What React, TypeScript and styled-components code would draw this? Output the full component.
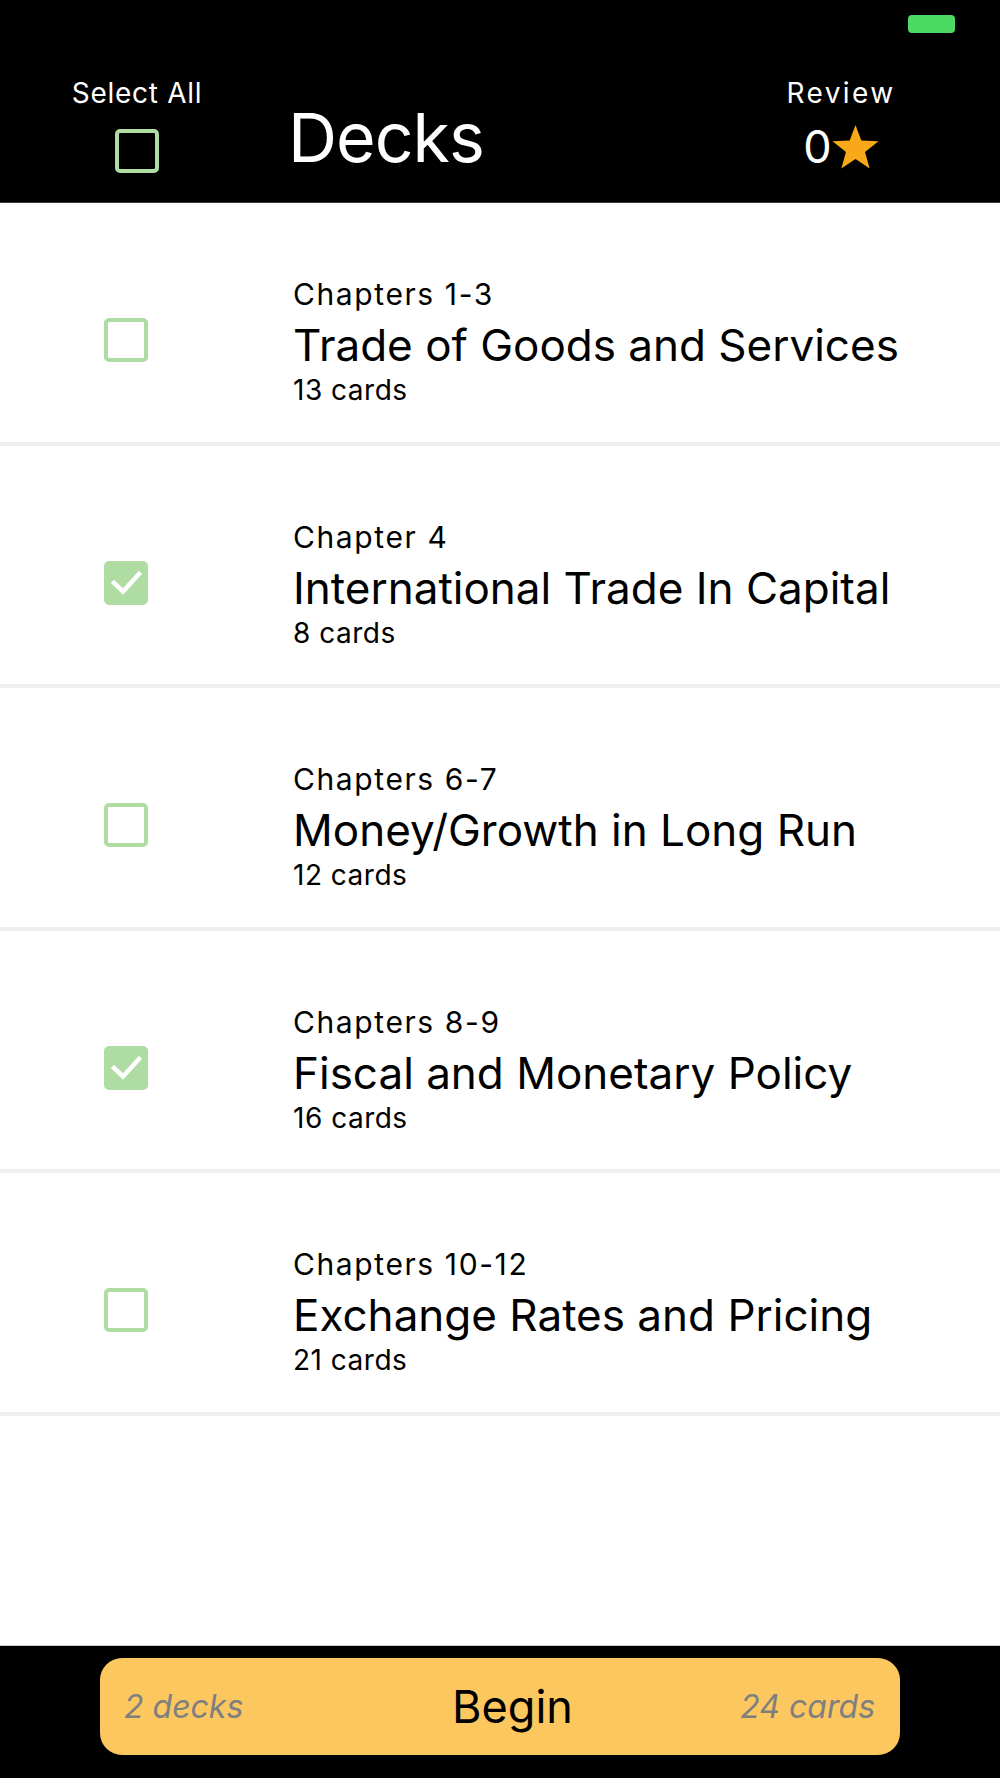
import React from "react";
import styled, { createGlobalStyle } from "styled-components";

const GlobalStyle = createGlobalStyle`
  html, body { margin: 0; padding: 0; background: #ffffff; }
  body { font-family: Inter, "Noto Sans", "Liberation Sans", sans-serif; }
  * { box-sizing: border-box; }
`;

const Page = styled.div`
  width: 1000px;
  height: 1778px;
  display: flex;
  flex-direction: column;
  background: #ffffff;
`;

const Header = styled.header`
  height: 203px;
  background: #000000;
  display: flex;
  flex-direction: column;
  border-bottom: 1px solid #3a3a3a;
`;

const StatusBar = styled.div`
  height: 79px;
  display: flex;
  justify-content: flex-end;
  align-items: flex-start;
  padding: 15px 45px 0 0;
`;

const Battery = styled.div`
  width: 47px;
  height: 18px;
  border-radius: 4px;
  background: #4cd964;
`;

const NavRow = styled.div`
  flex: 1;
  display: flex;
  align-items: flex-start;
`;

const NavSide = styled.div<{ $width: number; $right?: number }>`
  width: ${(p) => p.$width}px;
  margin-right: ${(p) => p.$right ?? 0}px;
  display: flex;
  flex-direction: column;
  align-items: center;
`;

const NavLabel = styled.div<{ $spacing: number }>`
  color: #ffffff;
  font-size: 28px;
  line-height: 28px;
  letter-spacing: ${(p) => p.$spacing}px;
`;

const Title = styled.h1`
  flex: 1;
  margin: 24px 0 0 14px;
  color: #ffffff;
  font-size: 68px;
  line-height: 68px;
  font-weight: 400;
  letter-spacing: -1px;
`;

const ReviewCount = styled.div`
  margin-top: 17px;
  display: flex;
  align-items: center;
  color: #ffffff;
  font-size: 45px;
  line-height: 45px;
`;

const Box = styled.div<{ $checked: boolean; $mt: number }>`
  width: 44px;
  height: 44px;
  flex-shrink: 0;
  margin-top: ${(p) => p.$mt}px;
  border-radius: 5px;
  border: 4px solid #aedca2;
  background: ${(p) => (p.$checked ? "#aedca2" : "transparent")};
  display: flex;
  align-items: center;
  justify-content: center;
`;

const List = styled.main`
  flex: 1;
  display: flex;
  flex-direction: column;
`;

const Row = styled.div`
  height: 242.5px;
  border-bottom: 4px solid #efefef;
  display: flex;
  align-items: flex-start;
  padding: 76px 0 0 104px;
`;

const DeckText = styled.div`
  margin-left: 145px;
  display: flex;
  flex-direction: column;
  color: #000000;
`;

const Chapter = styled.div`
  font-size: 30px;
  line-height: 30px;
  letter-spacing: 1.6px;
`;

const DeckName = styled.div`
  margin-top: 14px;
  font-size: 44px;
  line-height: 44px;
`;

const CardCount = styled.div`
  margin-top: 9px;
  font-size: 28px;
  line-height: 28px;
  letter-spacing: 0.5px;
`;

const Footer = styled.footer`
  height: 133px;
  background: #000000;
  border-top: 1px solid #c8c8c8;
  padding: 12px 100px 0 100px;
`;

const BeginButton = styled.button`
  width: 800px;
  height: 97px;
  border: none;
  border-radius: 22px;
  background: #fbc75e;
  display: grid;
  grid-template-columns: 1fr auto 1fr;
  align-items: center;
  padding: 0 25px 0 24px;
  font-family: inherit;
  cursor: pointer;
`;

const Meta = styled.span<{ $align: "left" | "right" }>`
  justify-self: ${(p) => (p.$align === "left" ? "start" : "end")};
  color: #7f7f7f;
  font-size: 32px;
  font-style: italic;
`;

const BeginLabel = styled.span`
  margin-left: 26px;
  color: #000000;
  font-size: 45px;
`;

const Check = () => (
  <svg width="32" height="26" viewBox="0 0 32 26">
    <path d="M4 13 L13 21.5 L29 4" fill="none" stroke="#ffffff" strokeWidth="4.5" strokeLinecap="square" />
  </svg>
);

const Star = () => (
  <svg width="47" height="44" viewBox="0 0 47 44">
    <path
      d="M23.5 0 L29.3 15.6 L46.5 16.3 L33 26.9 L37.7 43.5 L23.5 33.9 L9.3 43.5 L14 26.9 L0.5 16.3 L17.7 15.6 Z"
      fill="#f8a818"
    />
  </svg>
);

const decks = [
  { chapter: "Chapters 1-3", name: "Trade of Goods and Services", cards: 13, checked: false },
  { chapter: "Chapter 4", name: "International Trade In Capital", cards: 8, checked: true },
  { chapter: "Chapters 6-7", name: "Money/Growth in Long Run", cards: 12, checked: false },
  { chapter: "Chapters 8-9", name: "Fiscal and Monetary Policy", cards: 16, checked: true },
  { chapter: "Chapters 10-12", name: "Exchange Rates and Pricing", cards: 21, checked: false },
];

export default function App() {
  return (
    <>
      <GlobalStyle />
      <Page>
        <Header>
          <StatusBar>
            <Battery />
          </StatusBar>
          <NavRow>
            <NavSide $width={274}>
              <NavLabel $spacing={0.7}>Select All</NavLabel>
              <Box $checked={false} $mt={22} />
            </NavSide>
            <Title>Decks</Title>
            <NavSide $width={200} $right={59}>
              <NavLabel $spacing={2.4}>Review</NavLabel>
              <ReviewCount>
                0
                <Star />
              </ReviewCount>
            </NavSide>
          </NavRow>
        </Header>
        <List>
          {decks.map((d) => (
            <Row key={d.name}>
              <Box $checked={d.checked} $mt={39}>
                {d.checked && <Check />}
              </Box>
              <DeckText>
                <Chapter>{d.chapter}</Chapter>
                <DeckName>{d.name}</DeckName>
                <CardCount>{d.cards} cards</CardCount>
              </DeckText>
            </Row>
          ))}
        </List>
        <Footer>
          <BeginButton>
            <Meta $align="left">2 decks</Meta>
            <BeginLabel>Begin</BeginLabel>
            <Meta $align="right">24 cards</Meta>
          </BeginButton>
        </Footer>
      </Page>
    </>
  );
}
